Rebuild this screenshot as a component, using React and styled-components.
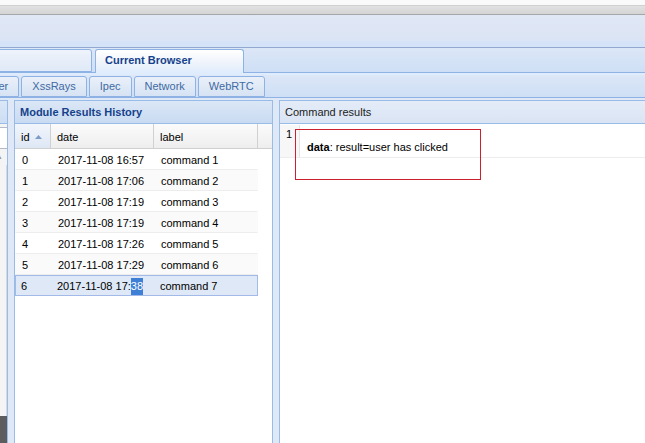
import React from 'react';
import styled, { createGlobalStyle } from 'styled-components';

const Global = createGlobalStyle`
  html, body { margin: 0; padding: 0; height: 100%; overflow: hidden; background: #dfe8f6; }
  body { font-family: "Liberation Sans", Arial, sans-serif; font-size: 11px; color: #000; }
  #root { height: 100%; }
`;

const Page = styled.div`
  display: flex;
  flex-direction: column;
  width: 645px;
  height: 443px;
  overflow: hidden;
`;

const TopStrip = styled.div`
  flex: none;
  height: 5px;
  background: #fafafa;
`;

const GrayBar = styled.div`
  flex: none;
  height: 8px;
  border-top: 1px solid #d0d0d0;
  background: linear-gradient(#e2e2e2, #d4d4d4);
  border-bottom: 1px solid #a6a6a6;
`;

const HeaderArea = styled.div`
  flex: none;
  height: 32px;
  background: linear-gradient(#e0e8f6 0, #dbe4f4 26px, #d4e3f7 26px, #d4e3f7 32px);
  border-bottom: 1px solid #92a8d1;
`;

const TabStrip = styled.div`
  flex: none;
  display: flex;
  align-items: flex-end;
  gap: ${p => (p.$main ? 3 : 2)}px;
  height: ${p => (p.$main ? 24 : 22)}px;
  background: linear-gradient(#dce7f7, #cedff5);
  border-bottom: 1px solid #8db2e3;
`;

const Tab = styled.div`
  flex: none;
  position: relative;
  box-sizing: border-box;
  height: ${p => (p.$main ? (p.$active ? 24 : 23) : 21)}px;
  ${p => (p.$main ? `width: 149px; padding-left: 9px;` : `padding: 0 10px;`)}
  ${p => (p.$offset ? `margin-left: ${p.$offset}px;` : '')}
  margin-bottom: ${p => (p.$active ? -1 : 0)}px;
  border: 1px solid #8db2e3;
  border-bottom: ${p => (p.$active ? 'none' : '1px solid #8db2e3')};
  border-radius: 3px 3px 0 0;
  background: ${p =>
    p.$active
      ? 'linear-gradient(#ffffff, #eef3fb 60%, #deecfd)'
      : p.$main
      ? 'linear-gradient(#eef3fb, #e0e9f7)'
      : 'linear-gradient(#eaf0f9, #d6e3f4)'};
  color: ${p => (p.$active ? '#15428b' : '#416aa3')};
  font-weight: ${p => (p.$active ? 'bold' : 'normal')};
  font-size: 11px;
  line-height: ${p => (p.$main ? 20 : 18)}px;
  white-space: nowrap;
  z-index: ${p => (p.$active ? 1 : 0)};
`;

const Spacer = styled.div`
  flex: none;
  height: 2px;
  background: #deecfd;
`;

const Body = styled.div`
  flex: 1;
  min-height: 0;
  display: flex;
  gap: 6px;
  padding-top: 2px;
  background: #dfe8f6;
`;

const LeftStub = styled.div`
  flex: none;
  width: 7px;
  display: flex;
  flex-direction: column;
  border-right: 1px solid #99bbe8;
  border-top: 1px solid #99bbe8;
  background: #f4f4f4;
`;

const StubHeader = styled.div`
  flex: none;
  height: 22px;
  background: linear-gradient(#dae7f6, #cddef3);
  border-bottom: 1px solid #99bbe8;
`;

const StubInput = styled.div`
  flex: none;
  height: 20px;
  margin-top: 3px;
  background: #fff;
  border-top: 1px solid #b5b8c8;
  border-bottom: 1px solid #b5b8c8;
`;

const StubArrow = styled.div`
  flex: none;
  height: 12px;
  margin-top: 4px;
  margin-left: -3px;
  color: #555;
  font-size: 9px;
  line-height: 12px;
`;

const StubFill = styled.div`
  flex: 1;
  border-right: 1px solid #d8d8d8;
`;

const StubDark = styled.div`
  flex: none;
  height: 27px;
  background: #5d5d5d;
`;

const Panel = styled.div`
  box-sizing: border-box;
  display: flex;
  flex-direction: column;
  ${p => (p.$grow ? 'flex: 1;' : `flex: none; width: ${p.$width}px;`)}
  border: 1px solid #99bbe8;
  border-bottom: none;
  ${p => (p.$grow ? 'border-right: none;' : '')}
  background: #fff;
  min-width: 0;
`;

const PanelHeader = styled.div`
  flex: none;
  height: 22px;
  padding: 0 5px;
  line-height: 23px;
  border-bottom: 1px solid #99bbe8;
  background: ${p =>
    p.$plain ? 'linear-gradient(#e4ecf8, #d9e4f4)' : 'linear-gradient(#dbe7f6, #c9dbf2)'};
  color: ${p => (p.$plain ? '#222' : '#15428b')};
  font-weight: ${p => (p.$plain ? 'normal' : 'bold')};
  font-size: 11px;
  white-space: nowrap;
`;

const GridHead = styled.div`
  flex: none;
  display: flex;
  height: 24px;
  border-bottom: 1px solid #d0d0d0;
  background: linear-gradient(#fbfbfb, #eeeeee);
`;

const HeadCell = styled.div`
  flex: none;
  box-sizing: border-box;
  width: ${p => p.$w}px;
  display: flex;
  align-items: center;
  gap: 5px;
  padding: 2px 0 0 6px;
  border-right: 1px solid #d0d0d0;
  background: ${p => (p.$sorted ? 'linear-gradient(#f2f6fc, #dde7f4)' : 'transparent')};
  color: #000;
  font-size: 11px;
`;

const HeadFill = styled.div`
  flex: 1;
`;

const GridRow = styled.div`
  flex: none;
  box-sizing: border-box;
  display: flex;
  width: 243px;
  height: 21px;
  align-items: center;
  border: 1px solid ${p => (p.$selected ? '#a3bae9' : 'transparent')};
  border-bottom-color: ${p => (p.$selected ? '#a3bae9' : '#ededed')};
  background: ${p => (p.$selected ? '#dfe8f6' : p.$alt ? '#fafafa' : '#fff')};
`;

const Cell = styled.div`
  flex: none;
  box-sizing: border-box;
  width: ${p => p.$w}px;
  padding-left: ${p => p.$pad}px;
  font-size: 11px;
  white-space: nowrap;
  color: #000;
`;

const Selected = styled.span`
  background: #3f7fd6;
  color: #fff;
  padding: 2px 0 3px;
`;

const CmdBody = styled.div`
  position: relative;
  flex: 1;
  display: flex;
  flex-direction: column;
`;

const CmdRow = styled.div`
  flex: none;
  display: flex;
  height: 32px;
  margin-top: 1px;
  border-bottom: 1px solid #ededed;
`;

const Gutter = styled.div`
  flex: none;
  box-sizing: border-box;
  width: 20px;
  padding: 3px 7px 0 0;
  text-align: right;
  background: #f7f7f7;
  border-right: 1px solid #e4e4e4;
  font-size: 11px;
  line-height: 13px;
  color: #000;
`;

const CmdText = styled.div`
  padding: 16px 7px 0;
  font-size: 11px;
  line-height: 13px;
  color: #000;
  white-space: nowrap;
  b { font-weight: bold; }
`;

const Annotation = styled.div`
  position: absolute;
  left: 15px;
  top: 5px;
  width: 186px;
  height: 51px;
  box-sizing: border-box;
  border: 1px solid #cc1f2f;
  pointer-events: none;
`;

const SortArrow = () => (
  <svg width="7" height="4" viewBox="0 0 7 4">
    <path d="M0 4 L3.5 0 L7 4 Z" fill="#7c9dc8" />
  </svg>
);

const rows = [
  ['0', '2017-11-08 16:57', 'command 1'],
  ['1', '2017-11-08 17:06', 'command 2'],
  ['2', '2017-11-08 17:19', 'command 3'],
  ['3', '2017-11-08 17:19', 'command 4'],
  ['4', '2017-11-08 17:26', 'command 5'],
  ['5', '2017-11-08 17:29', 'command 6'],
  ['6', '2017-11-08 17:38', 'command 7'],
];

export default function App() {
  return (
    <>
      <Global />
      <Page>
        <TopStrip />
        <GrayBar />
        <HeaderArea />
        <TabStrip $main>
          <Tab $main $offset={-57} />
          <Tab $main $active>Current Browser</Tab>
        </TabStrip>
        <Spacer />
        <TabStrip>
          <Tab $offset={-29}>Rider</Tab>
          <Tab>XssRays</Tab>
          <Tab>Ipec</Tab>
          <Tab>Network</Tab>
          <Tab>WebRTC</Tab>
        </TabStrip>
        <Body>
          <LeftStub>
            <StubHeader />
            <StubInput />
            <StubArrow>^</StubArrow>
            <StubFill />
            <StubDark />
          </LeftStub>
          <Panel $width={259}>
            <PanelHeader>Module Results History</PanelHeader>
            <GridHead>
              <HeadCell $w={36} $sorted>
                id <SortArrow />
              </HeadCell>
              <HeadCell $w={103}>date</HeadCell>
              <HeadCell $w={104}>label</HeadCell>
              <HeadFill />
            </GridHead>
            {rows.map(([id, date, label], i) => {
              const sel = i === 6;
              return (
                <GridRow key={id} $alt={i % 2 === 1} $selected={sel}>
                  <Cell $w={sel ? 35 : 36} $pad={sel ? 5 : 6}>{id}</Cell>
                  <Cell $w={103} $pad={6}>
                    {sel ? (
                      <>
                        {date.slice(0, 14)}
                        <Selected>{date.slice(14)}</Selected>
                      </>
                    ) : (
                      date
                    )}
                  </Cell>
                  <Cell $w={104} $pad={6}>{label}</Cell>
                </GridRow>
              );
            })}
          </Panel>
          <Panel $grow>
            <PanelHeader $plain>Command results</PanelHeader>
            <CmdBody>
              <CmdRow>
                <Gutter>1</Gutter>
                <CmdText>
                  <b>data</b>: result=user has clicked
                </CmdText>
              </CmdRow>
              <Annotation />
            </CmdBody>
          </Panel>
        </Body>
      </Page>
    </>
  );
}
